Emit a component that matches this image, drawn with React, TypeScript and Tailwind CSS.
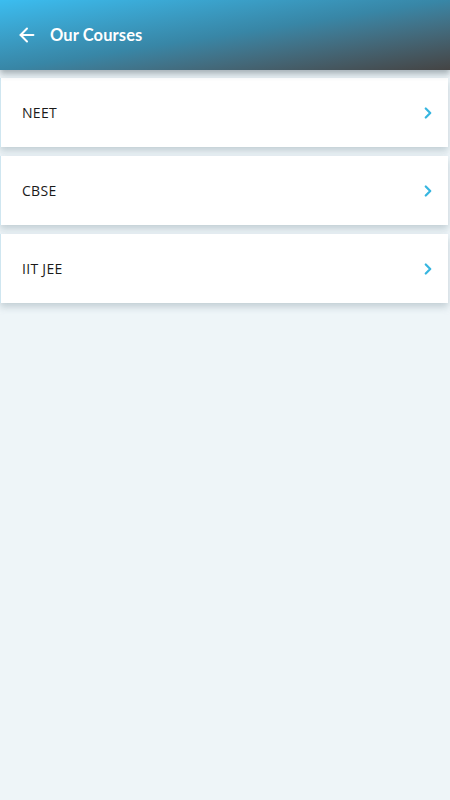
import { ArrowLeft, ChevronRight } from "lucide-react";

const COURSES = ["NEET", "CBSE", "IIT JEE"];

export default function App() {
  return (
    <div
      className="w-[450px] h-[800px] bg-[#eef5f8] flex flex-col overflow-hidden"
      style={{ fontFamily: "'Open Sans', 'Noto Sans', sans-serif" }}
    >
      {/* Header */}
      <div className="relative z-10 h-[70px] shrink-0 flex items-center pl-[16px] bg-gradient-to-br from-[#3bbdf0] via-[#3886a6] to-[#444444] shadow-[0_4px_6px_rgba(80,95,105,0.45)]">
        <ArrowLeft className="w-[22px] h-[22px] text-white" strokeWidth={2.2} />
        <span
          className="ml-[12px] text-white text-[16.5px] font-bold tracking-[0.1px]"
          style={{ fontFamily: "Lato, 'Open Sans', sans-serif" }}
        >
          Our Courses
        </span>
      </div>

      {/* Course list */}
      <div className="flex flex-col gap-[9px] pt-[8px] pr-[2px]">
        {COURSES.map((c) => (
          <div
            key={c}
            className="h-[69px] flex items-center justify-between bg-white border-l border-[#cfe6f0] pl-[21px] pr-[11px] shadow-[0_4px_7px_rgba(130,150,160,0.4)]"
          >
            <span className="text-[14px] text-[#1a1a1a] tracking-[0.3px]">{c}</span>
            <ChevronRight className="w-[18px] h-[18px] text-[#37b6e0]" strokeWidth={3} />
          </div>
        ))}
      </div>
    </div>
  );
}
